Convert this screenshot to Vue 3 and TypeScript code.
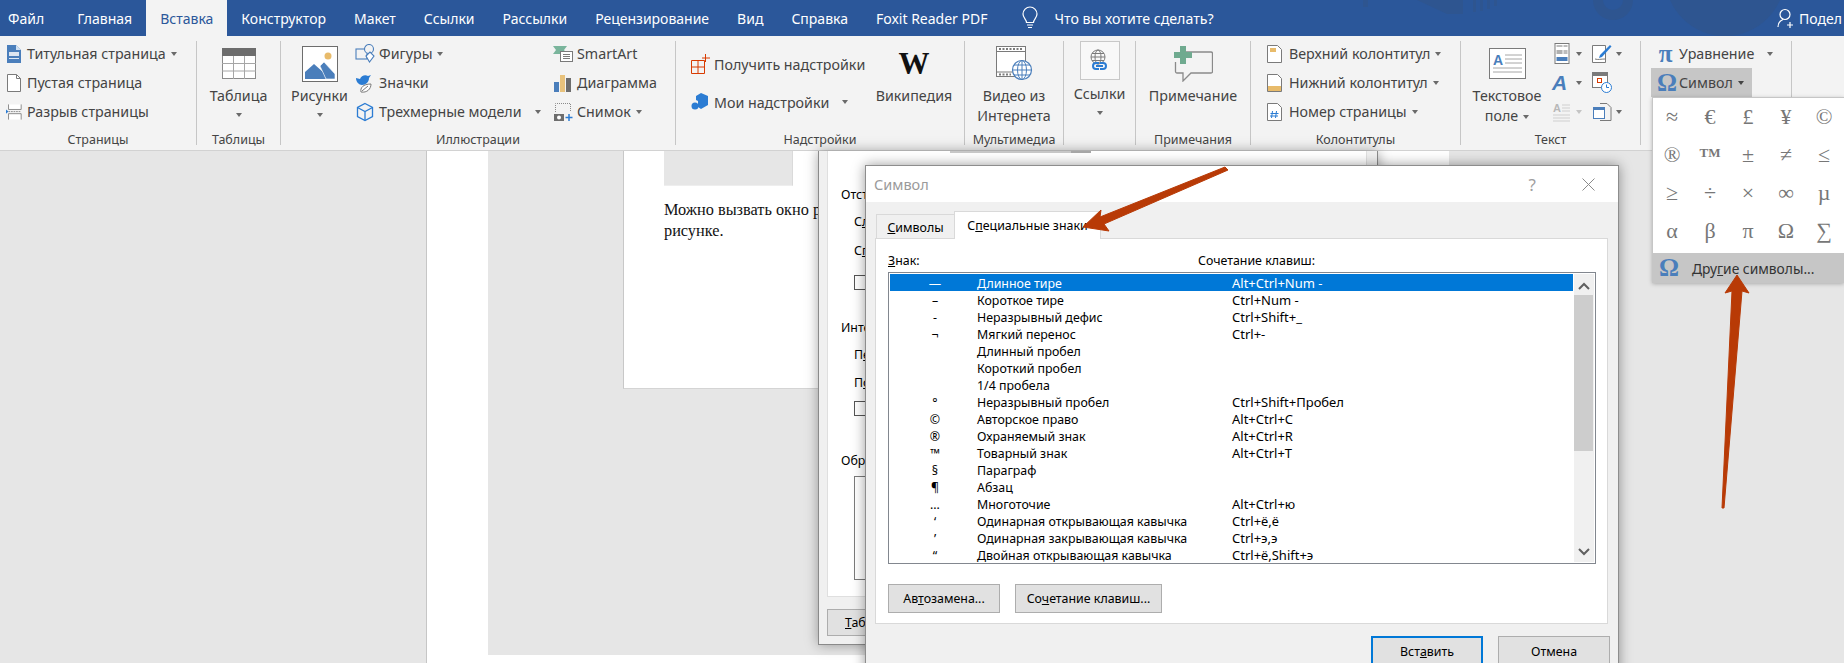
<script setup lang="ts">
const tabs = ['Файл', 'Главная', 'Вставка', 'Конструктор', 'Макет', 'Ссылки', 'Рассылки', 'Рецензирование', 'Вид', 'Справка', 'Foxit Reader PDF']

const symbols = ['≈', '€', '£', '¥', '©', '®', 'TM', '±', '≠', '≤', '≥', '÷', '×', '∞', 'µ', 'α', 'β', 'π', 'Ω', '∑']

interface SpecialRow {
  sign: string
  name: string
  keys: string
}

const rows: SpecialRow[] = [
  { sign: '—', name: 'Длинное тире', keys: 'Alt+Ctrl+Num -' },
  { sign: '–', name: 'Короткое тире', keys: 'Ctrl+Num -' },
  { sign: '-', name: 'Неразрывный дефис', keys: 'Ctrl+Shift+_' },
  { sign: '¬', name: 'Мягкий перенос', keys: 'Ctrl+-' },
  { sign: '', name: 'Длинный пробел', keys: '' },
  { sign: '', name: 'Короткий пробел', keys: '' },
  { sign: '', name: '1/4 пробела', keys: '' },
  { sign: '°', name: 'Неразрывный пробел', keys: 'Ctrl+Shift+Пробел' },
  { sign: '©', name: 'Авторское право', keys: 'Alt+Ctrl+C' },
  { sign: '®', name: 'Охраняемый знак', keys: 'Alt+Ctrl+R' },
  { sign: '™', name: 'Товарный знак', keys: 'Alt+Ctrl+T' },
  { sign: '§', name: 'Параграф', keys: '' },
  { sign: '¶', name: 'Абзац', keys: '' },
  { sign: '…', name: 'Многоточие', keys: 'Alt+Ctrl+ю' },
  { sign: '‘', name: 'Одинарная открывающая кавычка', keys: 'Ctrl+ё,ё' },
  { sign: '’', name: 'Одинарная закрывающая кавычка', keys: 'Ctrl+э,э' },
  { sign: '“', name: 'Двойная открывающая кавычка', keys: 'Ctrl+ё,Shift+э' },
]
</script>

<template>
  <div class="word">
    <header class="titlebar">
      <svg class="decor" width="520" height="36" viewBox="0 0 520 36">
        <rect x="39" y="0" width="5" height="7" />
        <path d="M93 0h30v14z" />
        <rect x="123" y="0" width="16" height="14" />
        <rect x="149" y="0" width="3" height="12" />
        <rect x="156" y="0" width="3" height="11" />
        <rect x="163" y="0" width="3" height="9" />
        <rect x="170" y="0" width="3" height="6" />
        <path d="M269 0a20 20 0 0 0 40 0h-10a10 10 0 0 1-20 0z" />
        <circle cx="401" cy="-24" r="60" />
      </svg>
      <nav class="tabs">
        <span v-for="t in tabs" :key="t" class="tab" :class="{ active: t === 'Вставка' }">{{ t }}</span>
      </nav>
      <svg class="bulb" width="18" height="24" viewBox="0 0 18 24" fill="none" stroke="#fff" stroke-width="1.2">
        <path d="M5.5 16.5c0-3-3.5-4.5-3.5-8.5a7 7 0 0 1 14 0c0 4-3.500 5.500-3.500 8.500z" />
        <path d="M6 19h6M7 21.500h4" />
      </svg>
      <span class="search">Что вы хотите сделать?</span>
      <div class="share">
        <svg width="19" height="20" viewBox="0 0 19 20" fill="none" stroke="#fff" stroke-width="1.2">
          <circle cx="8" cy="6.500" r="5" />
          <path d="M1 19c0-4 2.500-6.500 5-7.500M13 14v6M10 17h6" />
        </svg>
        <span>Подел</span>
      </div>
    </header>

    <section class="ribbon">
      <div class="group" style="width: 196px">
        <div class="body col g-pages">
          <div class="row">
            <svg class="ico" width="16" height="20" viewBox="0 0 16 20">
              <path d="M1 1h9l5 5v13H1z" fill="#4a7ebb" />
              <path d="M10 1l5 5h-5z" fill="#cfe0f2" />
              <path d="M3 8h10v4H3z" fill="#fff" opacity=".8" />
              <path d="M3 14h10v1H3z" fill="#dce8f5" />
            </svg>
            <span>Титульная страница</span><i class="caret" />
          </div>
          <div class="row">
            <svg class="ico" width="16" height="20" viewBox="0 0 16 20">
              <path d="M1.500 1.500h9l4 4v13h-13z" fill="#fff" stroke="#7a7a7a" />
              <path d="M10.500 1.500v4h4" fill="none" stroke="#7a7a7a" />
            </svg>
            <span>Пустая страница</span>
          </div>
          <div class="row">
            <svg class="ico" width="16" height="20" viewBox="3 0 19 20">
              <path d="M6 1v6h15V1M6 19v-7h15v7" fill="#fff" stroke="#7a7a7a" />
              <path d="M3 7l3 2.500-3 2.500z" fill="#2b7cd3" />
              <path d="M6 9.500h15" stroke="#7a7a7a" stroke-dasharray="2 1" />
            </svg>
            <span>Разрыв страницы</span>
          </div>
        </div>
        <div class="glabel">Страницы</div>
      </div>
      <i class="sep" />

      <div class="group" style="width: 83px">
        <div class="body big">
          <div class="bigico">
            <svg width="34" height="31" viewBox="0 0 34 31">
              <rect x=".5" y=".5" width="33" height="30" fill="#fff" stroke="#8a8a8a" />
              <rect x="0" y="0" width="34" height="8" fill="#6d6d6d" />
              <path d="M0 15.500h34M0 23h34M11.500 8v23M22.500 8v23" stroke="#a6a6a6" />
            </svg>
          </div>
          <span>Таблица</span>
          <i class="caret under" />
        </div>
        <div class="glabel">Таблицы</div>
      </div>
      <i class="sep" />

      <div class="group" style="width: 394px">
        <div class="body g-illus">
          <div class="big pics">
            <div class="bigico">
              <svg width="36" height="36" viewBox="0 0 36 36">
                <rect x=".5" y=".5" width="35" height="35" fill="#fff" stroke="#6d6d6d" />
                <circle cx="26" cy="10" r="3.500" fill="#e8bb6b" />
                <path d="M3 33V26l9-8 9 8 3 7z" fill="#4a7ebb" />
                <path d="M18 20l4-4 11 12v5H24z" fill="#4a7ebb" stroke="#fff" stroke-width=".6" />
              </svg>
            </div>
            <span>Рисунки</span>
            <i class="caret under" />
          </div>
          <div class="col illus-a">
            <div class="row">
              <svg class="ico" width="20" height="20" viewBox="0 0 20 20" fill="none" stroke="#4a7ebb" stroke-width="1.100">
                <rect x="1" y="5" width="11" height="10" />
                <circle cx="14" cy="5" r="4.500" fill="#f3f3f3" />
                <path d="M11 12l4-4 4 4-4.500 6z" fill="#fff" />
              </svg>
              <span>Фигуры</span><i class="caret" />
            </div>
            <div class="row">
              <svg class="ico" width="20" height="20" viewBox="0 0 20 20">
                <path d="M1 5l4 1c1-3 5-5 8-3l3-1-2 3c0 4-3 7-7 7-3 0-6-3-6-7z" fill="#2b7cd3" />
                <path d="M6 19c-1-4 2-8 10-8 0 5-4 9-10 8z" fill="#fff" stroke="#7a7a7a" />
                <path d="M7 18l6-5" stroke="#7a7a7a" />
              </svg>
              <span>Значки</span>
            </div>
            <div class="row">
              <svg class="ico" width="20" height="20" viewBox="0 0 20 20" fill="none" stroke="#2b7cd3" stroke-width="1.300">
                <path d="M10 1.500l7.500 4v9l-7.500 4-7.500-4v-9z" />
                <path d="M2.500 5.500l7.500 4 7.500-4M10 9.500v9" />
              </svg>
              <span>Трехмерные модели</span><i class="caret far" />
            </div>
          </div>
          <div class="col illus-b">
            <div class="row">
              <svg class="ico" width="20" height="20" viewBox="0 0 20 20">
                <path d="M0 2h14l-3 4 3 4H0l3-4z" fill="#7ab59c" />
                <rect x="7.500" y="7.500" width="12" height="10" fill="#fff" stroke="#7a7a7a" />
                <path d="M10 10.500h7M10 12.500h7M10 14.500h7" stroke="#7a7a7a" />
              </svg>
              <span>SmartArt</span>
            </div>
            <div class="row">
              <svg class="ico" width="20" height="20" viewBox="0 0 20 20">
                <rect x="1" y="9" width="5" height="10" fill="#4a7ebb" />
                <rect x="7" y="2" width="5" height="17" fill="#e8c27c" />
                <rect x="13" y="5" width="5" height="14" fill="#6d6d6d" />
              </svg>
              <span>Диаграмма</span>
            </div>
            <div class="row">
              <svg class="ico" width="20" height="20" viewBox="0 0 20 20">
                <path d="M2.500 10V1.500h15V9" fill="none" stroke="#8a8a8a" stroke-dasharray="1 1" />
                <rect x="1" y="12" width="10" height="7" fill="#6d6d6d" />
                <circle cx="6" cy="15.500" r="2" fill="#fff" />
                <path d="M16 12v7M12.500 15.500h7" stroke="#2b7cd3" stroke-width="1.500" />
              </svg>
              <span>Снимок</span><i class="caret" />
            </div>
          </div>
        </div>
        <div class="glabel">Иллюстрации</div>
      </div>
      <i class="sep" />

      <div class="group" style="width: 288px">
        <div class="body g-addins">
          <div class="col addins-col">
            <div class="tallrow">
              <svg class="ico" width="19" height="20" viewBox="0 0 19 20" fill="none" stroke="#d83b01">
                <path d="M.5 6.500h13v13H.5zM.5 13h13M7 6.500v13M14.500 0v8M11 4h8" />
              </svg>
              <span>Получить надстройки</span>
            </div>
            <div class="tallrow">
              <svg class="ico" width="19" height="20" viewBox="0 0 19 20">
                <path d="M10 1l7 3v9l-7 4-3-2V9l-2-1V4z" fill="#2b7cd3" />
                <circle cx="4" cy="14" r="3.500" fill="#2b7cd3" />
              </svg>
              <span>Мои надстройки</span><i class="caret far" />
            </div>
          </div>
          <div class="big wiki">
            <div class="bigico"><span class="wiki-w">W</span></div>
            <span>Википедия</span>
          </div>
        </div>
        <div class="glabel">Надстройки</div>
      </div>
      <i class="sep" />

      <div class="group" style="width: 98px">
        <div class="body big">
          <div class="bigico">
            <svg width="37" height="35" viewBox="0 0 37 35">
              <rect x=".5" y=".5" width="29" height="30" fill="#fff" stroke="#7a7a7a" />
              <path d="M.5 5.500h29M.5 26h29" stroke="#7a7a7a" />
              <path d="M3 3h24M3 28.500h12" stroke="#7a7a7a" stroke-width="2" stroke-dasharray="2 1.500" />
              <circle cx="26" cy="24" r="9.500" fill="#fff" stroke="#4a7ebb" stroke-width="1.200" />
              <ellipse cx="26" cy="24" rx="4.500" ry="9.500" fill="none" stroke="#4a7ebb" />
              <path d="M16.500 24h19M18 19h16M18 29h16M26 14.500v19" stroke="#4a7ebb" />
            </svg>
          </div>
          <span>Видео из</span>
          <span>Интернета</span>
        </div>
        <div class="glabel">Мультимедиа</div>
      </div>
      <i class="sep" />

      <div class="group" style="width: 71px">
        <div class="body big">
          <div class="linkbox">
            <svg width="19" height="24" viewBox="0 0 19 24" fill="none">
              <circle cx="8" cy="8" r="7" stroke="#7a7a7a" />
              <ellipse cx="8" cy="8" rx="3" ry="7" stroke="#7a7a7a" />
              <path d="M1 8h14M2 4.500h12M2 11.500h12" stroke="#7a7a7a" />
              <path d="M9 14h-3a3 3 0 0 0 0 6h3M10 20h3a3 3 0 0 0 0-6h-3M6 17h7" stroke="#2b7cd3" stroke-width="2" />
            </svg>
          </div>
          <span class="under-box">Ссылки</span>
          <i class="caret under" />
        </div>
      </div>
      <i class="sep" />

      <div class="group" style="width: 114px">
        <div class="body big">
          <div class="bigico">
            <svg width="39" height="36" viewBox="0 0 39 36" fill="none">
              <path d="M12 6h25a1.500 1.500 0 0 1 1.500 1.500v18a1.500 1.500 0 0 1-1.500 1.500H17l-8 8v-8H3a1.500 1.500 0 0 1-1.500-1.500V16" stroke="#8a8a8a" stroke-width="1.300" />
              <path d="M6 0h6v6h6v6h-6v6H6v-6H0V6h6z" fill="#6faa8f" />
            </svg>
          </div>
          <span>Примечание</span>
        </div>
        <div class="glabel">Примечания</div>
      </div>
      <i class="sep" />

      <div class="group" style="width: 209px">
        <div class="body col g-header">
          <div class="row">
            <svg class="ico" width="15" height="20" viewBox="0 0 15 20">
              <path d="M.5 1.500h10l4 4v13H.5z" fill="#fff" stroke="#7a7a7a" />
              <rect x="3" y="4" width="6" height="4" fill="#e8bb6b" />
            </svg>
            <span>Верхний колонтитул</span><i class="caret" />
          </div>
          <div class="row">
            <svg class="ico" width="15" height="20" viewBox="0 0 15 20">
              <path d="M.5 1.500h10l4 4v13H.5z" fill="#fff" stroke="#7a7a7a" />
              <rect x="1" y="13" width="13" height="5" fill="#e8bb6b" />
            </svg>
            <span>Нижний колонтитул</span><i class="caret" />
          </div>
          <div class="row">
            <svg class="ico" width="15" height="20" viewBox="0 0 15 20">
              <path d="M.5 1.500h10l4 4v13H.5z" fill="#fff" stroke="#7a7a7a" />
              <path d="M5.500 9l-1 7M9.500 9l-1 7M3.500 11.500h8M3 14h8" stroke="#2b7cd3" />
            </svg>
            <span>Номер страницы</span><i class="caret" />
          </div>
        </div>
        <div class="glabel">Колонтитулы</div>
      </div>
      <i class="sep" />

      <div class="group" style="width: 179px">
        <div class="body g-text">
          <div class="big textbox">
            <div class="bigico">
              <svg width="37" height="31" viewBox="0 0 37 31">
                <rect x=".5" y=".5" width="36" height="30" fill="#fff" stroke="#7a7a7a" />
                <text x="4" y="17" font-family="Liberation Sans" font-weight="700" font-size="14" fill="#4a7ebb">A</text>
                <path d="M16 7h17M16 11h17M16 15h17M4 20h29M4 24h29" stroke="#a6a6a6" />
              </svg>
            </div>
            <span>Текстовое</span>
            <span>поле<i class="caret" /></span>
          </div>
          <div class="col text-col">
            <div class="row">
              <svg class="ico" width="15" height="21" viewBox="0 0 15 21">
                <rect x=".5" y=".5" width="14" height="20" fill="#fff" stroke="#7a7a7a" />
                <rect x="2" y="7" width="6" height="4" fill="#b0b0b0" />
                <path d="M9 3h4M2 3h6M9 8h4M9 10h4" stroke="#7a7a7a" />
                <rect x="2" y="14" width="11" height="4" fill="#4a7ebb" />
              </svg>
              <i class="caret" />
            </div>
            <div class="row">
              <span class="wordart ico">A</span>
              <i class="caret" />
            </div>
            <div class="row">
              <svg class="ico dim" width="18" height="20" viewBox="0 0 18 20">
                <text x="0" y="10" font-family="Liberation Sans" font-weight="700" font-size="11" fill="#b8b8b8">A</text>
                <path d="M9 3h8M9 6h8M9 9h8M0 13h17M0 16h17M0 19h17" stroke="#cfcfcf" />
              </svg>
              <i class="caret light" />
            </div>
          </div>
          <div class="col text-col">
            <div class="row">
              <svg class="ico" width="20" height="20" viewBox="0 0 20 20" fill="none">
                <path d="M.5 1.500h13v17H.5z" fill="#fff" stroke="#7a7a7a" />
                <path d="M3 15c3 1 6 0 10 0" stroke="#7a7a7a" />
                <path d="M18 1l1.500 1.500L10 13l-3 1 1-3z" fill="#2b7cd3" />
              </svg>
              <i class="caret" />
            </div>
            <div class="row">
              <svg class="ico" width="20" height="22" viewBox="0 0 20 22" fill="none">
                <rect x=".5" y=".5" width="15" height="15" fill="#fff" stroke="#7a7a7a" />
                <rect x="0" y="0" width="16" height="4" fill="#7a7a7a" />
                <rect x="5.500" y="6.500" width="4" height="4" stroke="#d83b01" />
                <circle cx="14.500" cy="15.500" r="5" fill="#fff" stroke="#2b7cd3" />
                <path d="M14.500 12.500v3h2.500" stroke="#2b7cd3" />
              </svg>
              <i />
            </div>
            <div class="row">
              <svg class="ico" width="20" height="20" viewBox="0 0 20 20" fill="none">
                <path d="M8 1.500h7l4 4v13H8" stroke="#7a7a7a" />
                <rect x="1.500" y="5.500" width="11" height="11" fill="#fff" stroke="#4a7ebb" />
                <rect x="1" y="5" width="12" height="3" fill="#4a7ebb" />
              </svg>
              <i class="caret" />
            </div>
          </div>
        </div>
        <div class="glabel">Текст</div>
      </div>
      <i class="sep" />

      <div class="group symbols-group">
        <div class="body col">
          <div class="row wide">
            <span class="mathglyph">π</span>
            <span>Уравнение</span><i class="caret far" />
          </div>
          <div class="row open">
            <span class="mathglyph">Ω</span>
            <span>Символ</span><i class="caret dark" />
          </div>
        </div>
      </div>
      <i class="sep" />
    </section>

    <main class="workspace">
      <div class="sheet">
        <div class="gap">
          <div class="snippet">
            <div class="picture" />
            <p>Можно вызвать окно р<br />рисунке.</p>
          </div>
        </div>
      </div>

      <div class="para-dialog">
        <div class="para-edge" />
        <div class="para-panel">
          <div class="cap">Отст</div>
          <div class="opt first">С<u>л</u></div>
          <div class="opt second-line">С<u>п</u></div>
          <div class="check" />
          <div class="cap second">Инте</div>
          <div class="opt first">П<u>е</u></div>
          <div class="opt">П<u>о</u></div>
          <div class="check tight" />
          <div class="cap third">Обр</div>
          <div class="preview" />
        </div>
        <div class="para-foot">
          <button class="btn tabs-btn"><u>Т</u>аб</button>
        </div>
      </div>

      <div class="dialog">
        <div class="dlg-title">
          <span class="dlg-name">Символ</span>
          <span class="dlg-help">?</span>
          <svg width="13" height="13" viewBox="0 0 13 13" stroke="#8a8a8a" fill="none">
            <path d="M.5.500l12 12M12.500.500l-12 12" />
          </svg>
        </div>
        <div class="dlg-body">
          <div class="dlg-tabs">
            <span class="dlg-tab"><u>С</u>имволы</span>
            <span class="dlg-tab on">С<u>п</u>ециальные знаки</span>
          </div>
          <div class="dlg-panel">
            <div class="list-head">
              <span class="sign-head"><u>З</u>нак:</span>
              <span>Сочетание клавиш:</span>
            </div>
            <div class="list">
              <div class="list-rows">
                <div v-for="(r, i) in rows" :key="r.name" class="list-row" :class="{ sel: i === 0 }">
                  <span class="sign">{{ r.sign }}</span>
                  <span>{{ r.name }}</span>
                  <span class="keys">{{ r.keys }}</span>
                </div>
              </div>
              <div class="scroll">
                <svg width="20" height="21" viewBox="0 0 20 21" fill="none" stroke="#606060" stroke-width="2">
                  <path d="M5 15l5-5 5 5" />
                </svg>
                <div class="thumb" />
                <svg class="down" width="20" height="21" viewBox="0 0 20 21" fill="none" stroke="#606060" stroke-width="2">
                  <path d="M5 8l5 5 5-5" />
                </svg>
              </div>
            </div>
            <div class="panel-btns">
              <button class="btn auto">Ав<u>т</u>озамена...</button>
              <button class="btn combo">Со<u>ч</u>етание клавиш...</button>
            </div>
          </div>
          <div class="dlg-foot">
            <button class="btn main primary">Вст<u>а</u>вить</button>
            <button class="btn main">Отмена</button>
          </div>
        </div>
      </div>
    </main>

    <div class="menu">
      <div class="menu-grid">
        <span v-for="s in symbols" :key="s" class="menu-sym" :class="{ tm: s === 'TM' }">{{ s }}</span>
      </div>
      <div class="menu-item">
        <span class="mathglyph">Ω</span>
        <span class="menu-text">Дру<u>г</u>ие символы...</span>
      </div>
    </div>

    <svg class="arrows" width="1844" height="663" viewBox="0 0 1844 663">
      <path d="M1225 167L1228 170 1104 224 1109 231 1083 227 1101 210 1100 217z" fill="#b83a06" stroke="#b83a06" stroke-linejoin="round" />
      <path d="M1737 275L1749 293 1742 291 1724 508 1722 508 1732 291 1725 293z" fill="#b83a06" stroke="#b83a06" stroke-linejoin="round" />
    </svg>
  </div>
</template>

<style>
html,
body {
  margin: 0;
  background: #e6e6e6;
}
</style>

<style scoped>
.word {
  position: relative;
  width: 1844px;
  height: 663px;
  overflow: hidden;
  display: flex;
  flex-direction: column;
  font-family: 'Noto Sans', 'Liberation Sans', sans-serif;
  font-size: 12.4px;
  color: #000;
  background: #e6e6e6;
}

/* title bar */
.titlebar {
  position: relative;
  height: 36px;
  flex: none;
  display: flex;
  align-items: center;
  background: #2b579a;
  color: #fff;
  font-size: 14px;
}

.decor {
  position: absolute;
  left: 1324px;
  top: 0;
  fill: #2e5590;
}

.tabs {
  display: flex;
  align-self: stretch;
  position: relative;
}

.tab {
  display: flex;
  align-items: center;
  padding: 0 14px;
}

.tab:first-child {
  padding: 0 19px 0 8px;
}

.tab.active {
  background: #f3f3f3;
  color: #2b579a;
}

.bulb {
  position: relative;
  margin-left: 20px;
}

.search {
  position: relative;
  margin-left: 15px;
  font-size: 14.2px;
}

.share {
  position: absolute;
  left: 1777px;
  top: 8px;
  display: flex;
  align-items: center;
  gap: 3px;
  white-space: nowrap;
}

/* ribbon */
.ribbon {
  flex: none;
  display: flex;
  padding-top: 5px;
  box-sizing: border-box;
  background: #f3f3f3;
  border-bottom: 1px solid #d2d2d2;
  height: 115px;
  color: #444;
  font-size: 14.25px;
  white-space: nowrap;
}

.sep {
  width: 1px;
  height: 104px;
  flex: none;
  background: #c6c6c6;
}

.group {
  position: relative;
  flex: none;
  display: flex;
  flex-direction: column;
}

.body {
  height: 91px;
}

.glabel {
  position: absolute;
  left: 0;
  right: 0;
  top: 90px;
  line-height: 18px;
  font-size: 12.5px;
  text-align: center;
  color: #444;
}

.col {
  display: flex;
  flex-direction: column;
  margin-top: -2px;
}

.row {
  height: 29px;
  display: flex;
  align-items: center;
}

.ico {
  flex: none;
}

.caret {
  display: inline-block;
  flex: none;
  width: 0;
  height: 0;
  margin-left: 5px;
  border-left: 3.5px solid transparent;
  border-right: 3.5px solid transparent;
  border-top: 4px solid #6a6a6a;
  vertical-align: middle;
}

.caret.far {
  margin-left: 13px;
}

.caret.light {
  border-top-color: #c4c4c4;
}

.caret.dark {
  border-top-color: #444;
}

.caret.under {
  margin: 7px 0 0;
}

.big {
  display: flex;
  flex-direction: column;
  align-items: center;
  line-height: 20px;
}

.bigico {
  height: 45px;
  display: flex;
  justify-content: center;
  align-items: center;
}

.g-pages {
  padding-left: 6px;
}

.g-pages .ico {
  margin-right: 5px;
}

.g-illus,
.g-addins,
.g-text {
  display: flex;
}

.pics {
  width: 71px;
  margin-left: 3px;
}

.illus-a {
  width: 198px;
  flex: none;
}

.illus-a .ico,
.illus-b .ico {
  margin-right: 4px;
}

.g-addins {
  padding-left: 15px;
}

.addins-col {
  width: 183px;
  margin-top: 4px;
}

.tallrow {
  height: 38px;
  display: flex;
  align-items: center;
}

.tallrow .ico {
  margin-right: 4px;
}

.wiki {
  width: 80px;
  flex: none;
}

.wiki-w {
  font-family: 'Liberation Serif', serif;
  font-weight: 700;
  font-size: 31px;
  color: #111;
}

.linkbox {
  width: 38px;
  height: 37px;
  display: flex;
  align-items: center;
  justify-content: center;
  border: 1px solid #c8c8c8;
  background: #f8f8f8;
}

.under-box {
  margin-top: 4px;
}

.g-header {
  padding-left: 16px;
}

.g-header .ico {
  margin-right: 7px;
}

.textbox {
  width: 92px;
  flex: none;
}

.text-col {
  width: 40px;
  flex: none;
}

.text-col:nth-child(2) {
  margin-left: -1px;
}

.text-col .ico {
  width: 20px;
}

.text-col .caret {
  margin-left: 4px;
}

.wordart {
  font-family: 'Liberation Sans', sans-serif;
  font-style: italic;
  font-weight: 700;
  font-size: 21px;
  color: #4a7ebb;
  line-height: 20px;
}

.symbols-group {
  width: 150px;
  padding-left: 10px;
  box-sizing: border-box;
}

.symbols-group .row {
  padding-left: 6px;
  box-sizing: border-box;
}

.row.open {
  width: 101px;
  background: #c6c6c6;
}

.mathglyph {
  width: 17px;
  margin-right: 5px;
  flex: none;
  font-family: 'Liberation Serif', serif;
  font-weight: 700;
  font-size: 25px;
  line-height: 22px;
  color: #4a7ebb;
  text-align: center;
}

/* document area */
.workspace {
  position: relative;
  flex: 1;
  min-height: 0;
}

.sheet {
  position: absolute;
  left: 426px;
  top: 0;
  width: 1023px;
  height: 512px;
  display: flex;
  padding: 0 0 8px 61px;
  box-sizing: border-box;
  background: #fff;
  border-left: 1px solid #c6c6c6;
}

.gap {
  flex: 1;
  padding-left: 135px;
  background: #e6e6e6;
}

.snippet {
  height: 237px;
  padding-left: 40px;
  background: #fff;
  border-left: 1px solid #c8c8c8;
  border-bottom: 1px solid #d4d4d4;
}

.picture {
  width: 128px;
  height: 34px;
  background: #e6e6e6;
  border-right: 1px solid #dadada;
  border-bottom: 1px solid #eee;
}

.snippet p {
  margin: 13px 0 0;
  font-family: 'Liberation Serif', serif;
  font-size: 16.3px;
  line-height: 21px;
  color: #111;
  white-space: nowrap;
}

.para-dialog {
  position: absolute;
  left: 818px;
  top: 0;
  width: 560px;
  height: 494px;
  box-sizing: border-box;
  padding: 0 10px 0 8px;
  background: #f0f0f0;
  border: 1px solid #8a8a8a;
  border-top: 0;
  box-shadow: 0 0 12px rgba(0, 0, 0, 0.35);
}

.para-edge {
  position: absolute;
  left: 131px;
  top: 0;
  width: 141px;
  height: 2px;
  background: linear-gradient(90deg, #c8c8c8 86%, #a8a8a8 86%);
}

.para-panel {
  height: 446px;
  box-sizing: border-box;
  padding: 35px 0 0 13px;
  background: #fff;
  border: 1px solid #dfdfdf;
  border-top: 0;
}

.cap,
.opt {
  line-height: 18px;
  white-space: nowrap;
}

.opt {
  margin: 10px 0 0 13px;
}

.opt.first {
  margin-top: 9px;
}

.opt.second-line {
  margin-top: 11px;
}

.check {
  width: 13px;
  height: 13px;
  margin: 15px 0 0 13px;
  border: 1px solid #555;
}

.check.tight {
  margin-top: 9px;
}

.cap.second {
  margin-top: 29px;
}

.cap.third {
  margin-top: 36px;
}

.preview {
  width: 500px;
  height: 102px;
  margin: 6px 0 0 13px;
  border: 1px solid #7a7a7a;
}

.para-foot {
  padding-top: 12px;
}

.btn {
  box-sizing: border-box;
  padding: 0;
  font: inherit;
  color: #000;
  background: #e1e1e1;
  border: 1px solid #adadad;
}

.tabs-btn {
  width: 112px;
  height: 27px;
  white-space: nowrap;
  text-align: left;
  padding-left: 17px;
}

.dialog {
  position: absolute;
  left: 865px;
  top: 14px;
  width: 754px;
  height: 540px;
  box-sizing: border-box;
  display: flex;
  flex-direction: column;
  border: 1px solid #8d8d8d;
  border-bottom: 0;
  background: #f0f0f0;
  box-shadow: 0 0 12px rgba(0, 0, 0, 0.4);
}

.dlg-title {
  height: 36px;
  flex: none;
  display: flex;
  align-items: center;
  padding: 0 23px 0 8px;
  background: #fff;
}

.dlg-name {
  flex: 1;
  font-size: 14.5px;
  color: #9a9a9a;
}

.dlg-help {
  margin-right: 46px;
  font-size: 17px;
  color: #a0a0a0;
}

.dlg-body {
  flex: 1;
  padding: 9px 9px 0 9px;
}

.dlg-tabs {
  display: flex;
  align-items: flex-end;
  height: 28px;
  margin-bottom: -1px;
  padding-left: 1px;
  position: relative;
}

.dlg-tab {
  height: 25px;
  width: 78px;
  box-sizing: border-box;
  line-height: 25px;
  text-align: center;
  border: 1px solid #d9d9d9;
  border-bottom: 0;
  border-right: 0;
}

.dlg-tab.on {
  width: 147px;
  height: 28px;
  line-height: 28px;
  background: #fff;
  border-right: 1px solid #d9d9d9;
}

.dlg-panel {
  width: 733px;
  height: 386px;
  box-sizing: border-box;
  padding: 12px 0 0 12px;
  background: #fff;
  border: 1px solid #d9d9d9;
}

.list-head {
  display: flex;
  line-height: 20px;
}

.sign-head {
  width: 310px;
}

.list {
  width: 708px;
  height: 292px;
  margin-top: 1px;
  box-sizing: border-box;
  display: flex;
  padding: 1px;
  border: 1px solid #82878f;
  background: #fff;
}

.list-rows {
  width: 683px;
  flex: none;
  overflow: hidden;
}

.list-row {
  display: grid;
  grid-template-columns: 87px 255px 1fr;
  height: 17px;
  line-height: 19px;
  white-space: nowrap;
}

.list-row.sel {
  background: #0078d7;
  color: #fff;
}

.sign {
  padding-left: 3px;
  text-align: center;
}

.keys {
  font-size: 13px;
}

.scroll {
  position: relative;
  width: 20px;
  margin-left: 1px;
  background: #f0f0f0;
}

.scroll svg {
  display: block;
}

.thumb {
  width: 19px;
  height: 156px;
  background: #cdcdcd;
}

.scroll .down {
  position: absolute;
  bottom: 0;
}

.panel-btns {
  display: flex;
  gap: 15px;
  margin-top: 20px;
}

.btn.auto {
  width: 112px;
  height: 29px;
}

.btn.combo {
  width: 147px;
  height: 29px;
}

.dlg-foot {
  display: flex;
  justify-content: flex-end;
  gap: 15px;
  padding: 12px 0 0;
  margin-right: -1px;
}

.btn.main {
  width: 112px;
  height: 30px;
}

.btn.primary {
  border: 2px solid #0078d7;
}

/* symbol drop-down */
.menu {
  position: absolute;
  left: 1652px;
  top: 97px;
  width: 192px;
  height: 186px;
  box-sizing: border-box;
  border: 1px solid #c6c6c6;
  border-right: 0;
  background: #fff;
  box-shadow: 0 1px 4px rgba(0, 0, 0, 0.25);
}

.menu-grid {
  display: grid;
  grid-template-columns: repeat(5, 38px);
  grid-auto-rows: 38px;
  height: 155px;
}

.menu-sym {
  display: flex;
  align-items: center;
  justify-content: center;
  font-family: 'Liberation Serif', serif;
  font-size: 22px;
  color: #777;
}

.menu-sym.tm {
  font-size: 13px;
  font-weight: 700;
  padding-bottom: 4px;
  box-sizing: border-box;
}

.menu-item {
  height: 30px;
  display: flex;
  align-items: center;
  padding-left: 6px;
  background: #c6c6c6;
  color: #333;
  font-size: 13.8px;
}

.menu-item .mathglyph {
  margin-right: 16px;
}

.arrows {
  position: absolute;
  left: 0;
  top: 0;
  pointer-events: none;
}
</style>
